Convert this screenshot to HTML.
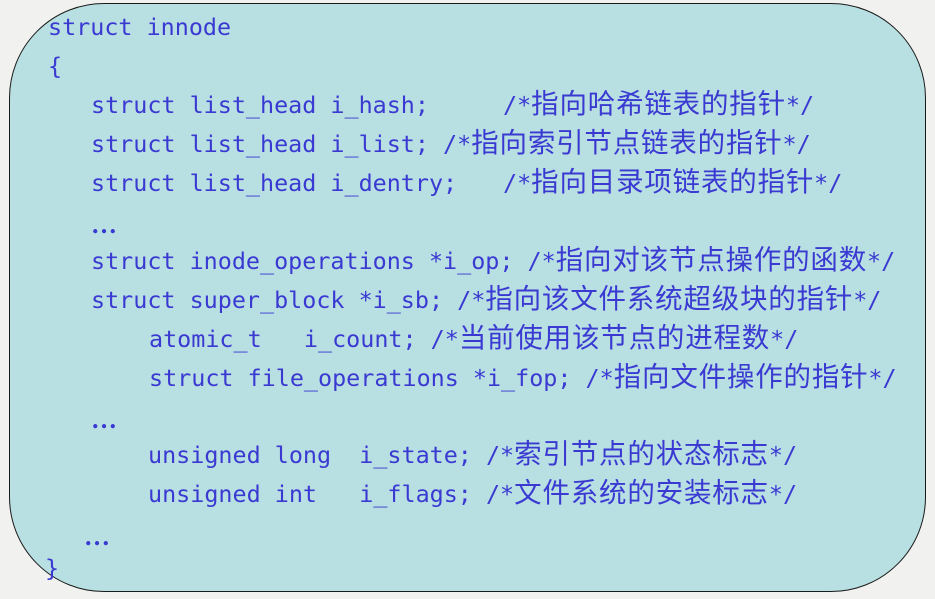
<!DOCTYPE html>
<html><head><meta charset="utf-8"><style>
html,body{margin:0;padding:0;}
body{width:935px;height:599px;background:#f1f1ef;position:relative;overflow:hidden;}
.box{position:absolute;left:9px;top:3px;width:915px;height:587px;background:#b8dfe2;border:1.6px solid #1a1a1a;border-radius:95px;}
.l{position:absolute;white-space:pre;color:#3a3ad2;font-family:"DejaVu Sans Mono",monospace;font-size:23.4px;line-height:39px;height:39px;}
.c{font-family:"Noto Sans CJK SC","WenQuanYi Zen Hei",sans-serif;font-size:27.5px;letter-spacing:0.8px;line-height:0;}
.d{font-family:"Liberation Serif",serif;font-size:26px;font-weight:bold;}
</style></head><body>
<div class="box"></div>
<div class="l" style="left:48px;top:8px">struct innode</div>
<div class="l" style="left:48px;top:47px">{</div>
<div class="l" style="left:91px;top:86px">struct list_head i_hash;</div>
<div class="l" style="left:503px;top:86px">/*<span class="c">指向哈希链表的指针</span>*/</div>
<div class="l" style="left:91px;top:125px">struct list_head i_list; /*<span class="c">指向索引节点链表的指针</span>*/</div>
<div class="l" style="left:91px;top:164px">struct list_head i_dentry;</div>
<div class="l" style="left:503px;top:164px">/*<span class="c">指向目录项链表的指针</span>*/</div>
<div class="l d" style="left:91px;top:205px">…</div>
<div class="l" style="left:91px;top:242px">struct inode_operations *i_op; /*<span class="c">指向对该节点操作的函数</span>*/</div>
<div class="l" style="left:91px;top:281px">struct super_block *i_sb; /*<span class="c">指向该文件系统超级块的指针</span>*/</div>
<div class="l" style="left:149px;top:320px">atomic_t   i_count; /*<span class="c">当前使用该节点的进程数</span>*/</div>
<div class="l" style="left:149px;top:359px">struct file_operations *i_fop; /*<span class="c">指向文件操作的指针</span>*/</div>
<div class="l d" style="left:91px;top:400px">…</div>
<div class="l" style="left:148px;top:436px">unsigned long  i_state; /*<span class="c">索引节点的状态标志</span>*/</div>
<div class="l" style="left:148px;top:475px">unsigned int   i_flags; /*<span class="c">文件系统的安装标志</span>*/</div>
<div class="l d" style="left:84px;top:517px">…</div>
<div class="l" style="left:45px;top:549px">}</div>
</body></html>
